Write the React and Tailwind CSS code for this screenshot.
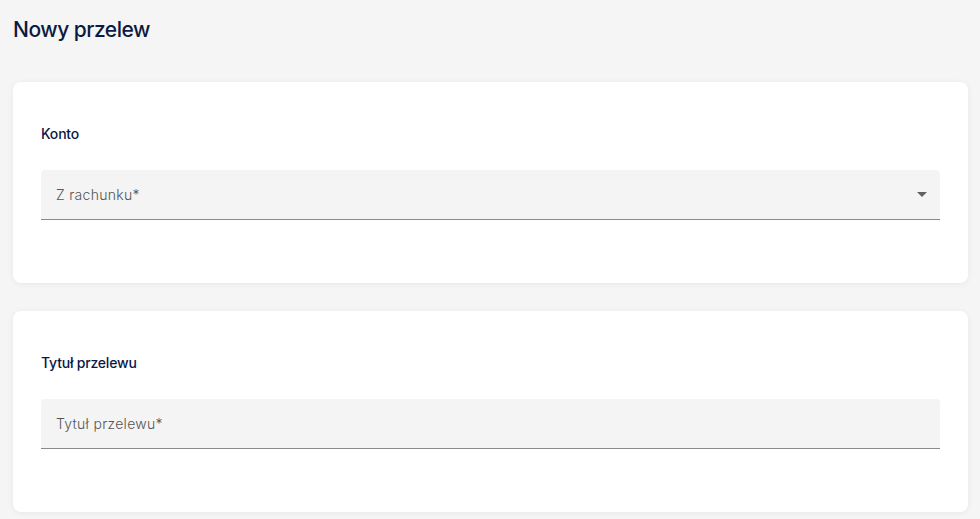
import React from 'react';

const Field = ({ label, select }) => (
  <div className="relative flex h-[50px] items-center rounded-t-[4px] border-b border-[#8a8a8a] bg-[#f4f4f4] px-[15px]">
    <span className="text-[14px] font-light tracking-[0.3px] text-[#555]">{label}</span>
    {select && (
      <svg className="absolute right-[13px] top-[22px]" width="10" height="5" viewBox="0 0 10 5">
        <path d="M0 0 L10 0 L5 5 Z" fill="#616161" />
      </svg>
    )}
  </div>
);

const Section = ({ title, children }) => (
  <div className="rounded-[8px] bg-white px-[28px] pb-[63px] pt-[44px] shadow-[0_1px_6px_rgba(0,0,0,0.06)]">
    <h2 className="mb-[28px] text-[14px] font-medium leading-[16px] tracking-[-0.2px] text-[#0b1746]">{title}</h2>
    {children}
  </div>
);

export default function App() {
  return (
    <div
      className="min-h-screen bg-[#f5f5f5] pl-[13px] pr-[12px] pt-[16px]"
      style={{ fontFamily: 'Inter, "Noto Sans", sans-serif' }}
    >
      <h1 className="mb-[39px] text-[21px] font-medium leading-[27px] tracking-[-0.5px] text-[#0b1a40]">Nowy przelew</h1>
      <div className="flex flex-col gap-[28px]">
        <Section title="Konto">
          <Field label="Z rachunku*" select />
        </Section>
        <Section title="Tytuł przelewu">
          <Field label="Tytuł przelewu*" />
        </Section>
      </div>
    </div>
  );
}
